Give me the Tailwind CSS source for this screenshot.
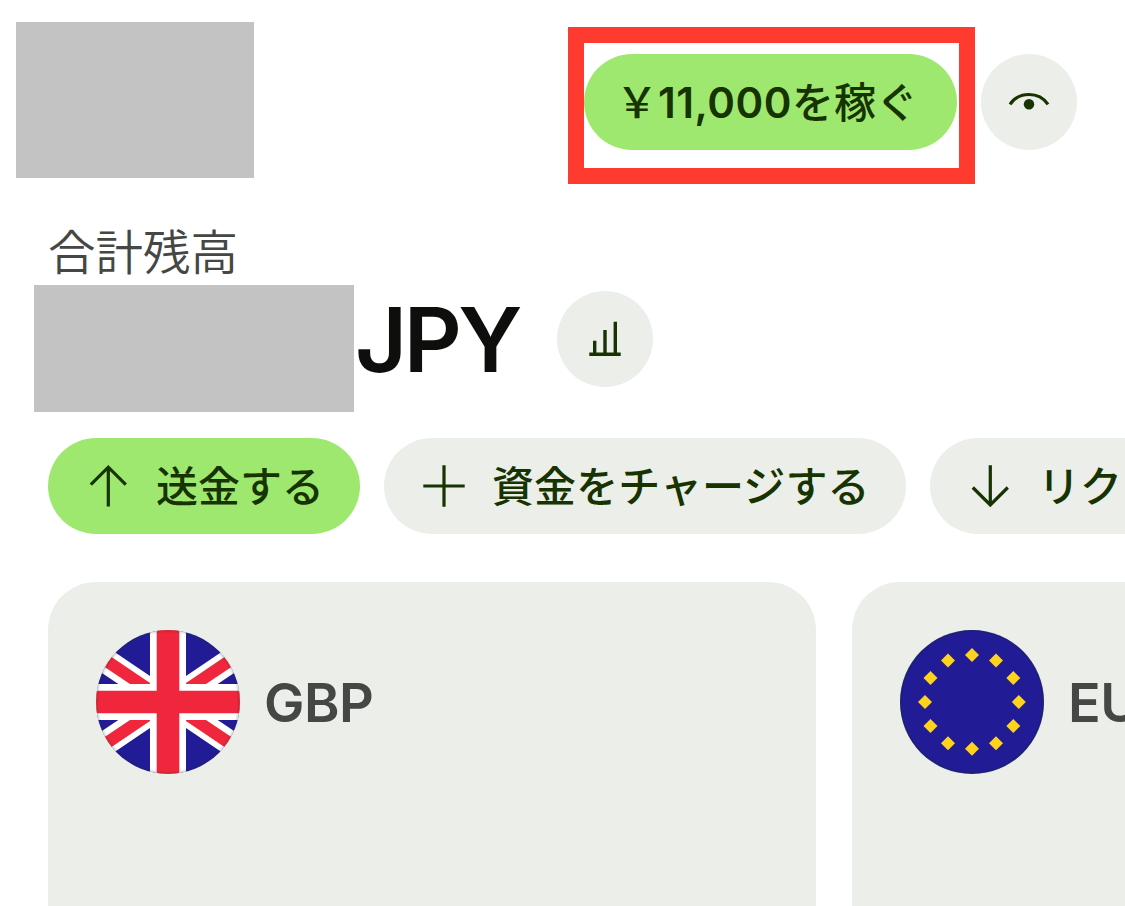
<!DOCTYPE html>
<html lang="ja">
<head>
    <meta charset="UTF-8">
    <meta name="viewport" content="width=device-width, initial-scale=1.0">
    <title>合計残高</title>
    <script src="https://cdn.jsdelivr.net/npm/@tailwindcss/browser@4"></script>
</head>
<body class="bg-white w-[1125px] h-[906px] overflow-hidden font-['Inter','Noto_Sans_CJK_JP',sans-serif] text-[#163300]">

    <!-- Header -->
    <header class="flex items-start h-[205px] pl-[15.500px] pt-[21.500px]">
        <div class="w-[238px] h-[156.500px] bg-[#c3c3c3]"></div>
        <div class="ml-[314.500px] mt-[5.500px] w-[407px] h-[157px] border-16 border-[#ff3b30] pt-[11px]">
            <button class="block w-[373px] h-24 rounded-full bg-[#9fe870] text-[42px] font-medium leading-[92px] whitespace-nowrap pl-[32px] pb-1 text-left"><span class="font-['Noto_Sans_CJK_JP']">&#xFFE5;</span><span class="font-semibold tracking-[0.500px]">11,000</span>を稼ぐ</button>
        </div>
        <button class="ml-[6px] mt-[32.500px] w-24 h-24 rounded-full bg-[#ebeee9]">
            <svg class="block" width="96" height="96" viewBox="0 0 96 96" fill="none">
                <path d="M29 50.300C33.500 43.800 40 40.500 48 40.500C56 40.500 62.500 43.800 67 50.300" stroke="#163300" stroke-width="3.200"/>
                <circle cx="48" cy="50.300" r="5.200" fill="#163300"/>
            </svg>
        </button>
    </header>

    <!-- Balance -->
    <section class="h-[233px] pt-[15px]">
        <h2 class="pl-12 h-[64px] text-[47.500px] leading-[65px] font-[350] text-[#454745]">合計残高</h2>
        <div class="flex items-start pl-[34px] pt-px">
            <div class="w-80 h-[127px] bg-[#c3c3c3]"></div>
            <div class="w-[203px] pl-px text-[90px] leading-[110px] font-semibold tracking-[-3.500px] text-[#0e0f0c]">JPY</div>
            <button class="mt-[6px] w-24 h-24 rounded-full bg-[#ebeee9]">
                <svg class="block" width="96" height="96" viewBox="0 0 96 96" fill="none" stroke="#163300" stroke-width="3.400">
                    <path d="M32.300 63.300H63.700M37.700 63V49.700M48 63V39M58.300 63V30.700"/>
                </svg>
            </button>
        </div>
    </section>

    <!-- Actions -->
    <nav class="flex gap-6 pl-12 text-[42px] font-medium whitespace-nowrap overflow-hidden">
        <button class="shrink-0 flex items-center gap-6 h-24 px-9 rounded-full bg-[#9fe870]">
            <svg width="48" height="48" viewBox="0 0 48 48" fill="none" stroke="#163300" stroke-width="3.200">
                <path d="M24.300 44.500V5M6.800 22.700L24.300 5.200L41.800 22.700"/>
            </svg>
            送金する
        </button>
        <button class="shrink-0 flex items-center gap-6 w-[522px] h-24 px-9 rounded-full bg-[#ebeee9] tracking-[0.100px]">
            <svg width="48" height="48" viewBox="0 0 48 48" fill="none" stroke="#163300" stroke-width="3.200">
                <path d="M24 3.300V44.700M3.300 24H44.700"/>
            </svg>
            資金をチャージする
        </button>
        <button class="shrink-0 flex items-center gap-6 w-[396px] h-24 px-9 rounded-full bg-[#ebeee9]">
            <svg width="48" height="48" viewBox="0 0 48 48" fill="none" stroke="#163300" stroke-width="3.200">
                <path d="M24.300 3.300V43M6.800 25.500L24.300 43L41.800 25.500"/>
            </svg>
            リク
        </button>
    </nav>

    <!-- Currency cards -->
    <section class="flex gap-9 pl-12 mt-12 text-[54px] font-semibold tracking-[-0.500px] text-[#454745] overflow-hidden">
        <div class="shrink-0 w-3xl h-[324px] rounded-t-[48px] bg-[#ebeee9] p-12">
            <div class="flex items-center gap-6">
                <svg width="144" height="144" viewBox="0 0 144 144">
                    <defs>
                        <clipPath id="round"><circle cx="72" cy="72" r="72"/></clipPath>
                        <g id="ray">
                            <path d="M-10 2.700L54 46V54H22.300L-10 32.200Z" fill="#fff"/>
                            <path d="M-10 9.700L54 53V54H34L-10 24.500Z" fill="#f0263c"/>
                        </g>
                    </defs>
                    <g clip-path="url(#round)">
                        <rect width="144" height="144" fill="#211b96"/>
                        <use href="#ray"/>
                        <use href="#ray" transform="translate(144 0) scale(-1 1)"/>
                        <use href="#ray" transform="translate(0 144) scale(1 -1)"/>
                        <use href="#ray" transform="translate(144 144) scale(-1 -1)"/>
                        <path d="M54 0H90V54H144V90H90V144H54V90H0V54H54Z" fill="#fff"/>
                        <path d="M60.700 0H83.300V60.700H144V83.300H83.300V144H60.700V83.300H0V60.700H60.700Z" fill="#f0263c"/>
                        <circle cx="72" cy="72" r="71" fill="none" stroke="#163300" stroke-opacity=".12" stroke-width="2.500"/>
                    </g>
                </svg>
                <span>GBP</span>
            </div>
        </div>
        <div class="shrink-0 w-3xl h-[324px] rounded-t-[48px] bg-[#ebeee9] p-12">
            <div class="flex items-center gap-6">
                <svg width="144" height="144" viewBox="0 0 144 144">
                    <defs>
                        <path id="star" d="M0 -7L7 0L0 7L-7 0Z" fill="#ffd21c"/>
                    </defs>
                    <circle cx="72" cy="72" r="72" fill="#211b96"/>
                    <use href="#star" x="72" y="25"/>
                    <use href="#star" x="96" y="30.500"/>
                    <use href="#star" x="113.300" y="48"/>
                    <use href="#star" x="118.800" y="72"/>
                    <use href="#star" x="113.300" y="96"/>
                    <use href="#star" x="96" y="113.300"/>
                    <use href="#star" x="72" y="118.800"/>
                    <use href="#star" x="48" y="113.300"/>
                    <use href="#star" x="30.500" y="96"/>
                    <use href="#star" x="25" y="72"/>
                    <use href="#star" x="30.500" y="48"/>
                    <use href="#star" x="48" y="30.500"/>
                    <circle cx="72" cy="72" r="71" fill="none" stroke="#163300" stroke-opacity=".2" stroke-width="2"/>
                </svg>
                <span>EUR</span>
            </div>
        </div>
    </section>
</body>
</html>
